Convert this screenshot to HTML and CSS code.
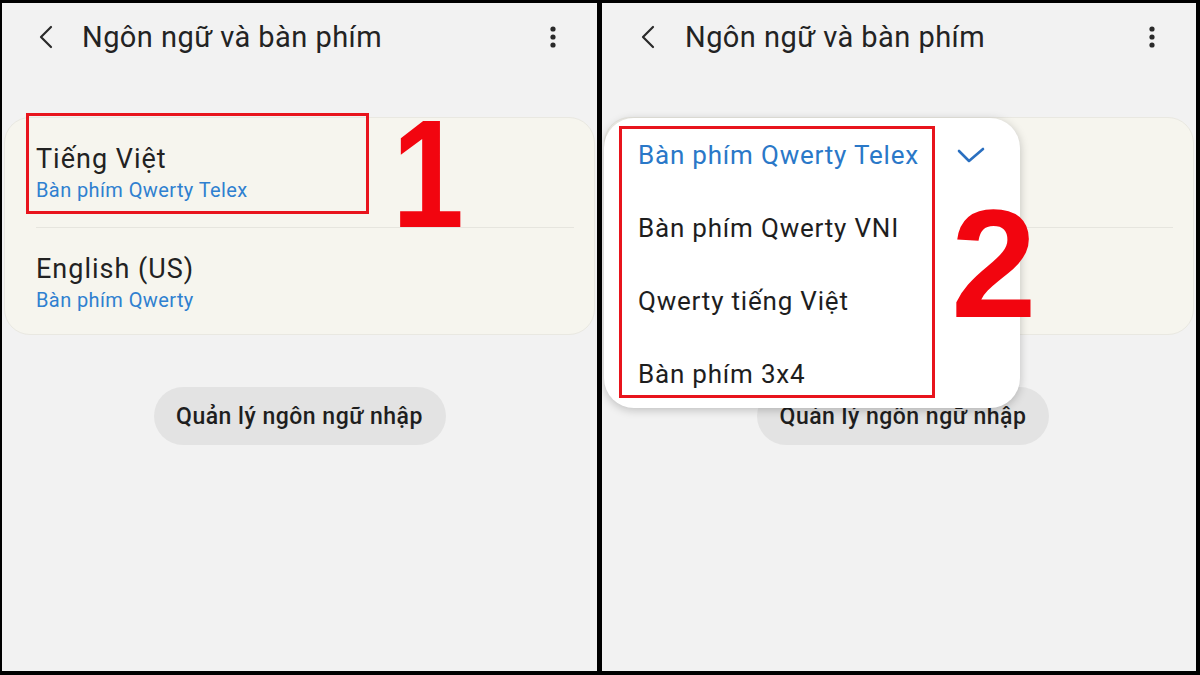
FILE: index.html
```html
<!DOCTYPE html>
<html lang="vi">
<head>
<meta charset="utf-8">
<title>Ngôn ngữ và bàn phím</title>
<link rel="stylesheet" href="styles.css">
</head>
<body>
<div class="frame">
  <section class="panel">
    <header class="bar">
      <svg class="back" width="18" height="24" viewBox="0 0 18 24"><path d="M14 2 L4 12 L14 22" fill="none" stroke="#2a2a2a" stroke-width="2.2" stroke-linecap="round" stroke-linejoin="round"/></svg>
      <h1 class="title">Ngôn ngữ và bàn phím</h1>
      <svg class="more" width="8" height="22" viewBox="0 0 8 22"><circle cx="4" cy="3" r="2.6" fill="#2a2a2a"/><circle cx="4" cy="11" r="2.6" fill="#2a2a2a"/><circle cx="4" cy="19" r="2.6" fill="#2a2a2a"/></svg>
    </header>
    <div class="card">
      <div class="item first">
        <div class="name">Tiếng Việt</div>
        <div class="sub">Bàn phím Qwerty Telex</div>
      </div>
      <div class="item second">
        <div class="name">English (US)</div>
        <div class="sub">Bàn phím Qwerty</div>
      </div>
    </div>
    <div class="btnrow"><div class="btn">Quản lý ngôn ngữ nhập</div></div>
    <div class="mark mark1"></div>
    <div class="num num1">1</div>
  </section>
  <section class="panel right">
    <header class="bar">
      <svg class="back" width="18" height="24" viewBox="0 0 18 24"><path d="M14 2 L4 12 L14 22" fill="none" stroke="#2a2a2a" stroke-width="2.2" stroke-linecap="round" stroke-linejoin="round"/></svg>
      <h1 class="title">Ngôn ngữ và bàn phím</h1>
      <svg class="more" width="8" height="22" viewBox="0 0 8 22"><circle cx="4" cy="3" r="2.6" fill="#2a2a2a"/><circle cx="4" cy="11" r="2.6" fill="#2a2a2a"/><circle cx="4" cy="19" r="2.6" fill="#2a2a2a"/></svg>
    </header>
    <div class="card">
      <div class="item first">
        <div class="name covered">Tiếng Việt</div>
        <div class="sub covered">Bàn phím Qwerty Telex</div>
      </div>
      <div class="item second">
        <div class="name covered">English (US)</div>
        <div class="sub covered">Bàn phím Qwerty</div>
      </div>
    </div>
    <div class="btnrow"><div class="btn">Quản lý ngôn ngữ nhập</div></div>
    <div class="popup">
      <div class="opt selected"><span>Bàn phím Qwerty Telex</span>
        <svg class="check" width="28" height="18" viewBox="0 0 28 18"><path d="M2 4 L12 14 L26 2" fill="none" stroke="#2a6fc0" stroke-width="2.6" stroke-linecap="round" stroke-linejoin="round"/></svg>
      </div>
      <div class="opt">Bàn phím Qwerty VNI</div>
      <div class="opt">Qwerty tiếng Việt</div>
      <div class="opt">Bàn phím 3x4</div>
    </div>
    <div class="mark mark2"></div>
    <div class="num num2">2</div>
  </section>
</div>
</body>
</html>
```
FILE: styles.css
```css
html, body {
  margin: 0;
  padding: 0;
  background: #000;
}
body {
  width: 1200px;
  height: 675px;
  overflow: hidden;
  font-family: Roboto, "Noto Sans", "Liberation Sans", sans-serif;
}
.frame {
  display: flex;
  gap: 5px;
  padding: 3px 4px 4px 2px;
  height: 668px;
}
.panel {
  position: relative;
  width: 595px;
  height: 668px;
  background: #f2f2f2;
}
.panel.right {
  width: 594px;
}
.bar {
  height: 68px;
  display: flex;
  align-items: center;
  padding: 0 40px 0 35px;
}
.panel.right .bar {
  padding-left: 37px;
}
.back {
  flex: none;
  margin-right: 27px;
}
.panel.right .back {
  margin-right: 28px;
}
.title {
  flex: 1;
  margin: 0;
  font-size: 29px;
  font-weight: 400;
  color: #232323;
  letter-spacing: 0.45px;
}
.more {
  flex: none;
}
.card {
  margin: 46px 2px 0 2px;
  background: #f6f5ee;
  border: 1px solid #e9e8e1;
  border-radius: 26px;
}
.item {
  margin-left: 31px;
  padding: 25px 0 0 0;
}
.item.first {
  height: 84px;
  border-bottom: 1px solid #e6e5de;
  margin-right: 20px;
}
.item.second {
  height: 81px;
}
.name {
  font-size: 27px;
  line-height: 32px;
  letter-spacing: 1px;
  color: #222;
}
.sub {
  margin-top: 3px;
  font-size: 20px;
  line-height: 24px;
  letter-spacing: 0.4px;
  color: #2f80d0;
}
.covered {
  visibility: hidden;
}
.btnrow {
  display: flex;
  justify-content: center;
  margin-top: 52px;
}
.panel.right .btnrow {
  padding-left: 8px;
}
.btn {
  width: 292px;
  height: 58px;
  border-radius: 29px;
  background: #e3e3e3;
  display: flex;
  align-items: center;
  justify-content: center;
  font-size: 23px;
  font-weight: 500;
  letter-spacing: 0.5px;
  color: #1e1e1e;
}
.mark {
  position: absolute;
  border: 3px solid #e8141c;
  box-sizing: border-box;
}
.mark1 {
  left: 24px;
  top: 110px;
  width: 343px;
  height: 101px;
}
.num {
  position: absolute;
  font-family: "Liberation Sans", Arial, sans-serif;
  font-weight: 700;
  font-size: 154px;
  line-height: 1;
  color: #f2050f;
  transform-origin: left top;
}
.num1 {
  left: 390px;
  top: 94px;
  transform: scaleX(0.84);
}
.popup {
  position: absolute;
  left: 2px;
  top: 115px;
  width: 416px;
  height: 290px;
  background: #fff;
  border-radius: 30px;
  box-shadow: 0 2px 10px rgba(0, 0, 0, 0.22);
}
.opt {
  height: 73px;
  display: flex;
  align-items: center;
  padding-left: 34px;
  font-size: 26px;
  letter-spacing: 0.8px;
  color: #1e1e1e;
}
.opt.selected {
  color: #2a78c8;
}
.check {
  margin-left: 38px;
  margin-top: 2px;
}
.mark2 {
  left: 17px;
  top: 123px;
  width: 316px;
  height: 272px;
}
.num2 {
  left: 349px;
  top: 184px;
}
```
